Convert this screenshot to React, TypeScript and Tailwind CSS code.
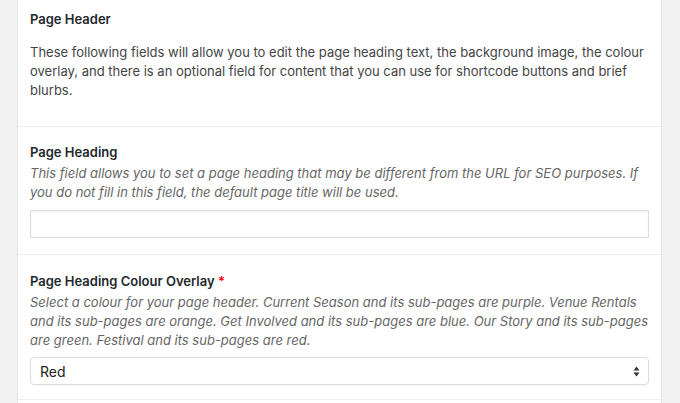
import React from "react";

export default function App() {
  return (
    <div
      className="w-[680px] h-[403px] overflow-hidden bg-[#f1f1f1] flex text-[#32373c]"
      style={{ fontFamily: "Inter, 'Noto Sans', sans-serif" }}
    >
      <div className="w-[17px] shrink-0" />
      <div className="w-[645px] shrink-0 bg-white border-x border-[#e5e5e5] flex flex-col">
        <div className="px-3 pt-[10px] pb-[26px] border-b border-[#eeeeee]">
          <div className="text-[13px] font-semibold leading-[18px] text-[#23282d]">Page Header</div>
          <p className="mt-[15px] text-[13px] leading-[19px] text-[#444]">
            These following fields will allow you to edit the page heading text, the background image, the colour overlay, and there is an optional field for content that you can use for shortcode buttons and brief blurbs.
          </p>
        </div>
        <div className="px-3 pt-[16px] pb-[16px] border-b border-[#eeeeee]">
          <div className="text-[13px] font-semibold leading-[18px] text-[#23282d]">Page Heading</div>
          <p className="mt-[3px] text-[13px] leading-[19px] italic text-[#666]">
            This field allows you to set a page heading that may be different from the URL for SEO purposes. If you do not fill in this field, the default page title will be used.
          </p>
          <input
            type="text"
            className="mt-[8px] block w-full h-[28px] border border-[#dddddd] bg-white shadow-[inset_0_1px_2px_rgba(0,0,0,0.07)] outline-none"
          />
        </div>
        <div className="px-3 pt-[17px] pb-[14px] border-b border-[#eeeeee]">
          <div className="text-[13px] font-semibold leading-[18px] text-[#23282d]">
            Page Heading Colour Overlay <span className="text-[#ff0000]">*</span>
          </div>
          <p className="mt-[3px] text-[13px] leading-[19px] italic text-[#666]">
            Select a colour for your page header. Current Season and its sub-pages are purple. Venue Rentals and its sub-pages are orange. Get Involved and its sub-pages are blue. Our Story and its sub-pages are green. Festival and its sub-pages are red.
          </p>
          <div className="mt-[7px] relative h-[28px] border border-[#dddddd] rounded-[4px] bg-white shadow-[0_1px_1px_rgba(0,0,0,0.04)] flex items-center">
            <span className="pl-[9px] text-[14px] text-[#222]">Red</span>
            <svg className="absolute right-[8px] top-[8px]" width="7" height="11" viewBox="0 0 7 11">
              <path d="M3.5 0.5 L6.5 4.5 L0.5 4.5 Z" fill="#333" />
              <path d="M3.5 10.5 L6.5 6.5 L0.5 6.5 Z" fill="#333" />
            </svg>
          </div>
        </div>
      </div>
    </div>
  );
}
